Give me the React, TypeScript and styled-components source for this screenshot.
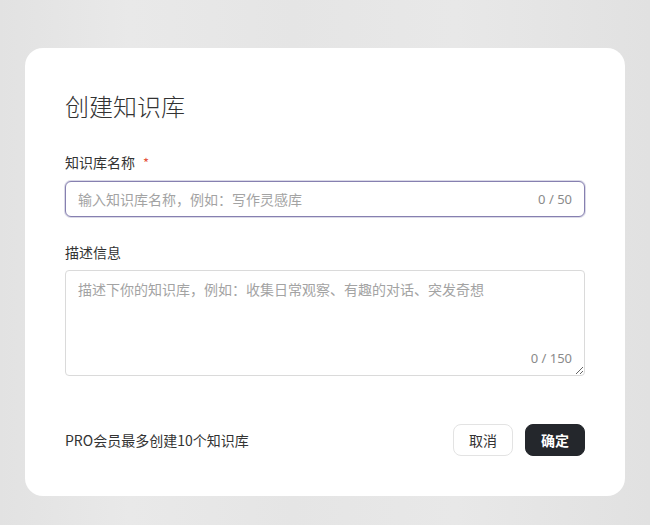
import React, { useState } from "react";
import styled, { createGlobalStyle } from "styled-components";

const GlobalStyle = createGlobalStyle`
  html, body {
    margin: 0;
    padding: 0;
  }
  body {
    font-family: "Noto Sans CJK SC", "Noto Sans", sans-serif;
    background: #e4e4e4;
  }
  * { box-sizing: border-box; }
`;

const Backdrop = styled.div`
  width: 650px;
  height: 525px;
  padding: 48px 25px 0;
  background:
    linear-gradient(90deg, #e2e2e2 0%, #e9e9e9 20%, #e5e5e5 45%, #e8e8e8 70%, #e1e1e1 100%);
`;

const Card = styled.div`
  width: 600px;
  height: 448px;
  background: #fff;
  border-radius: 18px;
  padding: 42px 40px 40px;
  display: flex;
  flex-direction: column;
`;

const Title = styled.h1`
  margin: 0 0 30px;
  font-size: 24px;
  line-height: 32px;
  font-weight: 300;
  color: #333;
`;

const Label = styled.label`
  display: block;
  font-size: 14px;
  line-height: 20px;
  color: #333;
  margin-bottom: 8px;
`;

const Required = styled.span`
  color: #e5533d;
  margin-left: 8px;
  font-size: 13px;
`;

const FieldWrap = styled.div<{ $mb: number }>`
  position: relative;
  margin-bottom: ${(p) => p.$mb}px;
`;

const TextInput = styled.input`
  width: 100%;
  height: 36px;
  border: 1px solid #8680b0;
  box-shadow: 0 0 0 1px rgba(134, 128, 176, 0.3);
  border-radius: 6px;
  padding: 0 64px 0 12px;
  font-family: inherit;
  font-size: 14px;
  color: #333;
  outline: none;
  &::placeholder { color: #a3a3a3; }
`;

const TextArea = styled.textarea`
  display: block;
  width: 100%;
  height: 106px;
  border: 1px solid #dadada;
  border-radius: 4px;
  padding: 8px 12px;
  font-family: inherit;
  font-size: 14px;
  line-height: 20px;
  color: #333;
  outline: none;
  resize: vertical;
  &::placeholder { color: #a3a3a3; }
`;

const Counter = styled.span<{ $bottom?: boolean }>`
  position: absolute;
  right: 13px;
  ${(p) => (p.$bottom ? "bottom: 9px;" : "top: 50%; transform: translateY(-50%);")}
  font-family: "Noto Sans", sans-serif;
  font-size: 13px;
  color: #8a8a8a;
  pointer-events: none;
`;

const Footer = styled.div`
  margin-top: auto;
  display: flex;
  align-items: center;
  justify-content: space-between;
`;

const Note = styled.span`
  font-size: 14px;
  color: #333;
`;

const Actions = styled.div`
  display: flex;
  gap: 12px;
`;

const Button = styled.button<{ $primary?: boolean }>`
  width: 60px;
  height: 32px;
  border-radius: 8px;
  font-family: inherit;
  font-size: 14px;
  cursor: pointer;
  border: 1px solid ${(p) => (p.$primary ? "#24272c" : "#e3e3e3")};
  background: ${(p) => (p.$primary ? "#24272c" : "#fff")};
  color: ${(p) => (p.$primary ? "#fff" : "#333")};
  font-weight: ${(p) => (p.$primary ? 700 : 400)};
`;

export default function App() {
  const [name, setName] = useState("");
  const [desc, setDesc] = useState("");

  return (
    <>
      <GlobalStyle />
      <Backdrop>
        <Card>
          <Title>创建知识库</Title>

          <Label>
            知识库名称<Required>*</Required>
          </Label>
          <FieldWrap $mb={25}>
            <TextInput
              value={name}
              maxLength={50}
              onChange={(e) => setName(e.target.value)}
              placeholder="输入知识库名称，例如：写作灵感库"
            />
            <Counter>{name.length} / 50</Counter>
          </FieldWrap>

          <Label>描述信息</Label>
          <FieldWrap $mb={0}>
            <TextArea
              value={desc}
              maxLength={150}
              onChange={(e) => setDesc(e.target.value)}
              placeholder="描述下你的知识库，例如：收集日常观察、有趣的对话、突发奇想"
            />
            <Counter $bottom>{desc.length} / 150</Counter>
          </FieldWrap>

          <Footer>
            <Note>PRO会员最多创建10个知识库</Note>
            <Actions>
              <Button>取消</Button>
              <Button $primary>确定</Button>
            </Actions>
          </Footer>
        </Card>
      </Backdrop>
    </>
  );
}
